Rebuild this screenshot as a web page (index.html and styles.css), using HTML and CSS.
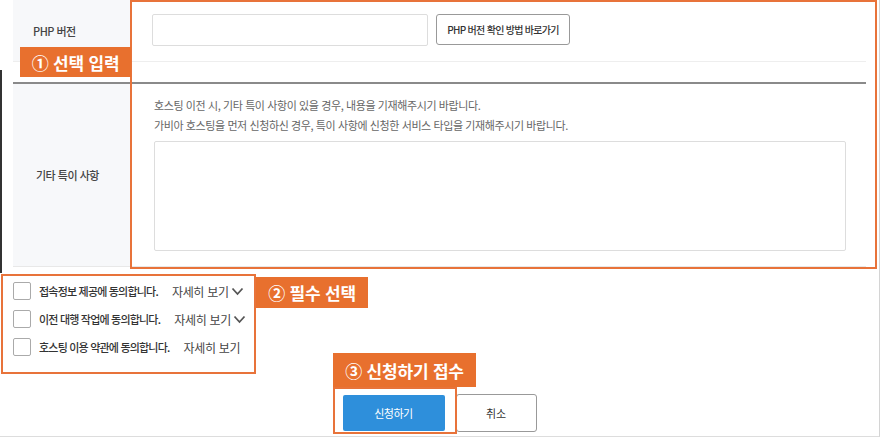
FILE: index.html
```html
<!DOCTYPE html>
<html lang="ko">
<head>
    <meta charset="UTF-8">
    <meta name="viewport" content="width=device-width, initial-scale=1.0">
    <title>호스팅 이전 신청</title>
    <link rel="stylesheet" href="styles.css">
</head>
<body>
    <div class="page">
        <div class="form-table">
            <div class="row row-php">
                <div class="row-label">PHP 버전</div>
                <div class="row-field">
                    <input type="text" class="text-input" />
                    <button type="button" class="sub-button">PHP 버전 확인 방법 바로가기</button>
                </div>
            </div>
            <div class="row-gap"></div>
            <div class="row row-etc">
                <div class="row-label">기타 특이 사항</div>
                <div class="row-field">
                    <p class="note">호스팅 이전 시, 기타 특이 사항이 있을 경우, 내용을 기재해주시기 바랍니다.</p>
                    <p class="note">가비아 호스팅을 먼저 신청하신 경우, 특이 사항에 신청한 서비스 타입을 기재해주시기 바랍니다.</p>
                    <textarea class="text-area"></textarea>
                </div>
            </div>
        </div>

        <div class="agree-box">
            <label class="agree-row">
                <span class="check"></span>
                <span class="agree-text">접속정보 제공에 동의합니다.</span>
                <span class="more">자세히 보기<svg width="13" height="9" viewBox="0 0 13 9"><path d="M1.5 1.5 L6.5 7 L11.5 1.5" fill="none" stroke="#555" stroke-width="1.8"/></svg></span>
            </label>
            <label class="agree-row">
                <span class="check"></span>
                <span class="agree-text">이전 대행 작업에 동의합니다.</span>
                <span class="more">자세히 보기<svg width="13" height="9" viewBox="0 0 13 9"><path d="M1.5 1.5 L6.5 7 L11.5 1.5" fill="none" stroke="#555" stroke-width="1.8"/></svg></span>
            </label>
            <label class="agree-row">
                <span class="check"></span>
                <span class="agree-text">호스팅 이용 약관에 동의합니다.</span>
                <span class="more">자세히 보기</span>
            </label>
        </div>

        <div class="button-row">
            <button type="button" class="submit-button">신청하기</button>
            <button type="button" class="cancel-button">취소</button>
        </div>

        <!-- 안내 표시 -->
        <div class="side-line"></div>
        <div class="mark mark-1"></div>
        <div class="mark mark-3"></div>
        <div class="tag tag-1">① 선택 입력</div>
        <div class="tag tag-2">② 필수 선택</div>
        <div class="tag tag-3">③ 신청하기 접수</div>
    </div>
</body>
</html>
```

FILE: styles.css
```css
body {
    margin: 0;
    font-family: "Noto Sans CJK KR", "Noto Sans", sans-serif;
    color: #333;
    background: #fff;
}
.page {
    position: relative;
    width: 879px;
    height: 436px;
    border-right: 1px solid #d4d4d4;
    border-bottom: 1px solid #ddd;
}
.form-table {
    margin-left: 13px;
    width: 853px;
}
.row {
    display: flex;
}
.row-php {
    height: 61px;
    border-bottom: 1px solid #eee;
}
.row-gap {
    height: 20px;
    border-bottom: 2px solid #8a8a8a;
}
.row-etc {
    height: 182px;
    border-bottom: 1px solid #e8e8e8;
}
.row-label {
    width: 97px;
    padding-left: 20px;
    background-color: #f7f8fa;
    display: flex;
    align-items: center;
    font-size: 11px;
    font-weight: 500;
    color: #444;
    letter-spacing: -0.5px;
}
.row-etc .row-label {
    padding-left: 23px;
    width: 94px;
}
.row-php .row-field {
    display: flex;
    align-items: center;
    padding-left: 22px;
    padding-bottom: 2px;
}
.text-input {
    width: 276px;
    height: 32px;
    box-sizing: border-box;
    border: 1px solid #ddd;
    border-radius: 2px;
    margin: 0;
}
.sub-button {
    margin-left: 8px;
    width: 134px;
    height: 31px;
    background: #fff;
    border: 1px solid #999;
    border-radius: 3px;
    font-family: inherit;
    font-size: 10px;
    font-weight: 500;
    color: #333;
    letter-spacing: -0.7px;
    padding: 0;
}
.row-etc .row-field {
    padding: 11px 0 0 24px;
}
.note {
    margin: 0;
    font-size: 11px;
    line-height: 20px;
    color: #666;
    letter-spacing: -0.4px;
}
.text-area {
    display: block;
    margin-top: 6px;
    width: 692px;
    height: 110px;
    box-sizing: border-box;
    border: 1px solid #ddd;
    border-radius: 2px;
    resize: none;
}
.agree-box {
    margin: 7px 0 0 1px;
    width: 251px;
    height: 95px;
    border: 2px solid #e8733a;
    padding-top: 1px;
}
.agree-row {
    display: flex;
    align-items: center;
    height: 28px;
    padding-left: 10px;
    font-size: 11px;
    letter-spacing: -0.8px;
}
.check {
    width: 16px;
    height: 16px;
    border: 1px solid #aaa;
    border-radius: 2px;
    flex: none;
}
.agree-text {
    margin-left: 8px;
    color: #333;
    font-weight: 500;
}
.more {
    margin-left: 14px;
    font-size: 12px;
    letter-spacing: -0.3px;
    color: #444;
    display: flex;
    align-items: center;
    gap: 2px;
}
.button-row {
    display: flex;
    justify-content: center;
    gap: 11px;
    margin-top: 20px;
}
.submit-button {
    width: 102px;
    height: 36px;
    margin-top: 1px;
    background-color: #2e8fdb;
    color: #fff;
    border: none;
    border-radius: 2px;
    font-family: inherit;
    font-size: 11px;
    letter-spacing: -0.5px;
}
.cancel-button {
    width: 81px;
    height: 38px;
    background: #fff;
    color: #333;
    border: 1px solid #999;
    border-radius: 3px;
    font-family: inherit;
    font-size: 11px;
}
.side-line {
    position: absolute;
    left: 0;
    top: 70px;
    width: 2px;
    height: 203px;
    background: #333;
}
.mark {
    position: absolute;
    border: 2px solid #e8733a;
    box-sizing: border-box;
}
.mark-1 {
    left: 130px;
    top: 0;
    width: 747px;
    height: 269px;
}
.mark-3 {
    left: 333px;
    top: 387px;
    width: 124px;
    height: 47px;
}
.tag {
    position: absolute;
    background-color: #e8702e;
    color: #fff;
    font-size: 17px;
    font-weight: 700;
    display: flex;
    align-items: center;
    justify-content: center;
    letter-spacing: -0.2px;
}
.tag-1 {
    left: 20px;
    top: 47px;
    width: 111px;
    height: 30px;
}
.tag-2 {
    left: 256px;
    top: 277px;
    width: 112px;
    height: 31px;
}
.tag-3 {
    left: 333px;
    top: 353px;
    width: 143px;
    height: 34px;
}
```
